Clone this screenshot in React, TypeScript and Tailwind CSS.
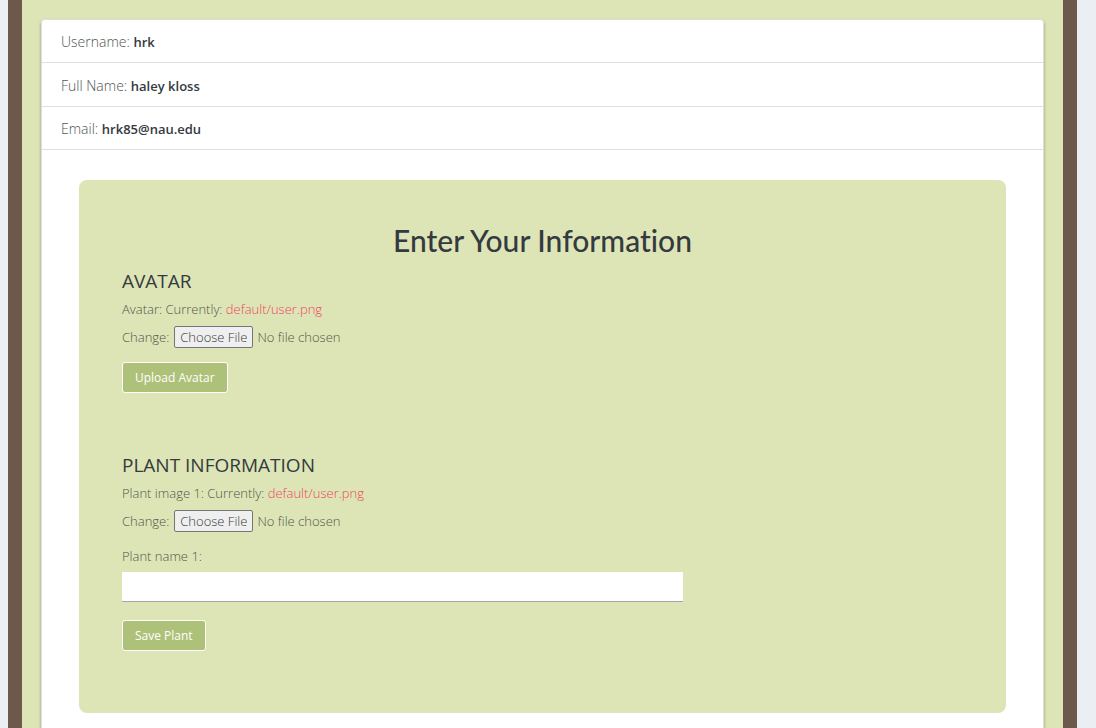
import React from "react";

const details = [
  { label: "Username:", value: "hrk" },
  { label: "Full Name:", value: "haley kloss" },
  { label: "Email:", value: "hrk85@nau.edu" },
];

function FileRow({ id }: { id: string }) {
  return (
    <div className="mt-[7px] flex items-center gap-[5px]">
      <label htmlFor={id}>Change:</label>
      <input
        id={id}
        type="file"
        className="h-[22px] w-72 text-[13px] leading-[20px] file:mr-1 file:h-[22px] file:rounded-[2px] file:border file:border-solid file:border-[#767676] file:bg-[#efefef] file:px-[5px] file:text-[13px] file:font-light file:leading-[20px] file:text-[#343a40]"
      />
    </div>
  );
}

function ActionButton({ children }: { children: React.ReactNode }) {
  return (
    <button
      type="submit"
      className="h-[31px] rounded-[3px] border border-white bg-[#adc178] px-3 pt-px text-[12px] font-normal text-white"
    >
      {children}
    </button>
  );
}

export default function App() {
  return (
    <div className="min-h-screen bg-[#ebeff3] pr-[19px] pl-2 font-['Open_Sans','Noto_Sans',sans-serif] font-light text-[#50564e]">
      <main className="flex min-h-screen flex-col border-x-[14px] border-[#6d584c] bg-[#dde5b6] px-[19px] pt-[19px]">
        <section className="grow rounded-t-[4px] border border-b-0 border-[#dcdfdb] bg-white pb-[15px] shadow-[0_2px_3px_rgba(0,0,0,0.35)]">
          <ul className="text-[14px]">
            {details.map((item) => (
              <li key={item.label} className="flex h-[43px] items-center border-b border-[#dddfe1] px-[19px] pt-[2px] nth-2:h-[44px]">
                <span>
                  {item.label} <strong className="text-[13px] font-semibold text-[#343a40]">{item.value}</strong>
                </span>
              </li>
            ))}
          </ul>
          <div className="mx-[37px] mt-[30px] rounded-lg bg-[#dde5b6] px-[43px] pt-[38px] pb-[62px] text-[13px] leading-[20px]">
            <h1 className="text-center font-['Lato',sans-serif] text-[30px] leading-[44px] font-medium text-[#343a40] [font-variant-ligatures:no-common-ligatures]">
              Enter Your Information
            </h1>
            <form onSubmit={(e) => e.preventDefault()}>
              <h2 className="mt-[7px] text-[19px] leading-[24px] font-normal text-[#343a40]">AVATAR</h2>
              <p className="mt-[6px]">
                Avatar: Currently: <a href="#avatar" className="text-[#ef4460]">default/user.png</a>
              </p>
              <div className="mb-[14px]"><FileRow id="avatar" /></div>
              <ActionButton>Upload Avatar</ActionButton>
            </form>
            <form className="mt-[60px]" onSubmit={(e) => e.preventDefault()}>
              <h2 className="text-[19px] leading-[24px] font-normal text-[#343a40]">PLANT INFORMATION</h2>
              <p className="mt-[6px]">
                Plant image 1: Currently: <a href="#plant" className="text-[#ef4460]">default/user.png</a>
              </p>
              <FileRow id="plant" />
              <label htmlFor="plant-name" className="mt-[14px] block">Plant name 1:</label>
              <input
                id="plant-name"
                type="text"
                className="mt-[6px] mb-[18px] block h-[30px] w-2/3 border-b border-[#a5a5a5] bg-white px-2 outline-none focus:border-[#adc178]"
              />
              <ActionButton>Save Plant</ActionButton>
            </form>
          </div>
        </section>
      </main>
    </div>
  );
}
